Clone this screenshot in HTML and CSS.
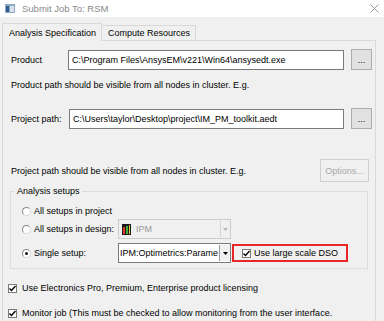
FILE: index.html
```html
<!DOCTYPE html>
<html lang="en">
<head>
  <meta charset="UTF-8" />
  <title>Submit Job To: RSM</title>
  <link rel="stylesheet" href="styles.css">
</head>
<body>
  <div class="window">
    <div class="titlebar">
      <svg class="app-icon" width="10" height="9" viewBox="0 0 10 9">
        <rect x="0" y="0" width="10" height="9" fill="#8fa9c4"/>
        <rect x="1" y="2" width="3" height="6" fill="#2f5e8e"/>
        <rect x="5" y="2" width="4" height="6" fill="#d9e2ec"/>
      </svg>
      <span class="title">Submit Job To: RSM</span>
      <svg class="close" width="9" height="9" viewBox="0 0 9 9">
        <path d="M0.5 0.5 L8.5 8.5 M8.5 0.5 L0.5 8.5" stroke="#9a9a9a" stroke-width="1"/>
      </svg>
    </div>

    <div class="tabs">
      <div class="tab active">Analysis Specification</div>
      <div class="tab">Compute Resources</div>
    </div>

    <div class="panel">
      <div class="path-row first">
        <span class="field-label">Product</span>
        <div class="textbox">C:\Program Files\AnsysEM\v221\Win64\ansysedt.exe</div>
        <button class="btn dots">...</button>
      </div>
      <div class="hint">Product path should be visible from all nodes in cluster. E.g.</div>

      <div class="path-row second">
        <span class="field-label">Project path:</span>
        <div class="textbox">C:\Users\taylor\Desktop\project\IM_PM_toolkit.aedt</div>
        <button class="btn dots">...</button>
      </div>

      <div class="hint-row">
        <span>Project path should be visible from all nodes in cluster. E.g.</span>
        <button class="btn options" disabled>Options...</button>
      </div>

      <fieldset class="group">
        <legend>Analysis setups</legend>
        <div class="radio-row">
          <span class="radio"></span>
          <span class="radio-label">All setups in project</span>
        </div>
        <div class="radio-row design">
          <span class="radio"></span>
          <span class="radio-label">All setups in design:</span>
          <div class="combo disabled">
            <svg class="design-icon" width="9" height="11" viewBox="0 0 9 11">
              <rect x="0" y="0" width="9" height="11" fill="#1a1a1a"/>
              <rect x="1" y="3" width="2" height="7" fill="#e23b2e"/>
              <rect x="4" y="2" width="2" height="8" fill="#3fae3a"/>
              <rect x="7" y="1" width="1" height="9" fill="#f2c230"/>
            </svg>
            <span class="combo-text">IPM</span>
            <span class="combo-arrow small">
              <svg width="5" height="3" viewBox="0 0 5 3"><path d="M0 0 L5 0 L2.5 3 Z" fill="#b5b5b5"/></svg>
            </span>
          </div>
        </div>
        <div class="radio-row single">
          <span class="radio checked"></span>
          <span class="radio-label">Single setup:</span>
          <div class="combo">
            <span class="combo-text">IPM:Optimetrics:Parame</span>
            <span class="combo-arrow">
              <svg width="5" height="3" viewBox="0 0 5 3"><path d="M0 0 L5 0 L2.5 3 Z" fill="#000"/></svg>
            </span>
          </div>
          <div class="highlight">
            <span class="check"><svg width="7" height="7" viewBox="0 0 7 7"><path d="M0.5 3.5 L2.5 5.5 L6.5 1" stroke="#000" stroke-width="1.4" fill="none"/></svg></span>
            <span>Use large scale DSO</span>
          </div>
        </div>
      </fieldset>

      <div class="check-row first-check">
        <span class="check"><svg width="7" height="7" viewBox="0 0 7 7"><path d="M0.5 3.5 L2.5 5.5 L6.5 1" stroke="#000" stroke-width="1.4" fill="none"/></svg></span>
        <span>Use Electronics Pro, Premium, Enterprise product licensing</span>
      </div>
      <div class="check-row">
        <span class="check"><svg width="7" height="7" viewBox="0 0 7 7"><path d="M0.5 3.5 L2.5 5.5 L6.5 1" stroke="#000" stroke-width="1.4" fill="none"/></svg></span>
        <span>Monitor job (This must be checked to allow monitoring from the user interface.</span>
      </div>
    </div>
  </div>
</body>
</html>
```

FILE: styles.css
```css
body {
  margin: 0;
  background: #f0f0f0;
}
.window {
  width: 384px;
  height: 321px;
  overflow: hidden;
  background: #f0f0f0;
  font-family: 'Liberation Sans', Arial, sans-serif;
  font-size: 9px;
  color: #000;
}
.titlebar {
  height: 17px;
  background: #fff;
  display: flex;
  align-items: center;
  padding-left: 5px;
}
.title {
  margin-left: 7px;
  color: #8a8a8a;
  font-size: 9.5px;
}
.close {
  margin-left: auto;
  margin-right: 5px;
}
.tabs {
  display: flex;
  align-items: flex-end;
  height: 17px;
  margin-top: 6px;
  padding-left: 2px;
}
.tab {
  height: 14px;
  line-height: 14px;
  padding: 0 5px 0 6px;
  border: 1px solid #d9d9d9;
  border-bottom: none;
  border-left: none;
  white-space: nowrap;
}
.tab.active {
  height: 17px;
  line-height: 19px;
  border-left: 1px solid #d9d9d9;
  padding: 0 5px 0 6px;
  margin-bottom: -1px;
  background: #f0f0f0;
  position: relative;
}
.panel {
  margin-left: 2px;
  width: 374px;
  height: 290px;
  border: 1px solid #d9d9d9;
  padding-left: 8px;
  box-sizing: border-box;
}
.path-row {
  display: flex;
  align-items: center;
  height: 21px;
}
.path-row.first {
  margin-top: 8px;
}
.path-row.second {
  margin-top: 17px;
}
.field-label {
  width: 57px;
  flex-shrink: 0;
}
.textbox {
  width: 271px;
  height: 18px;
  line-height: 18px;
  background: #fff;
  border: 1px solid #7a7a7a;
  padding-left: 3px;
  box-sizing: content-box;
  white-space: nowrap;
  overflow: hidden;
}
.path-row.second .textbox {
  width: 270px;
  margin-left: 1px;
}
.btn {
  font-family: inherit;
  font-size: 9px;
  background: #e1e1e1;
  border: 1px solid #adadad;
  padding: 0;
  color: #000;
}
.dots {
  width: 21px;
  height: 21px;
  margin-left: 7px;
  line-height: 14px;
}
.hint {
  margin-top: 9px;
  height: 12px;
  line-height: 12px;
}
.hint-row {
  margin-top: 30px;
  height: 23px;
  display: flex;
  align-items: center;
  justify-content: space-between;
  padding-right: 6px;
}
.options {
  width: 49px;
  height: 23px;
  background: #f0f0f0;
  border: 1px solid #cfcfcf;
  color: #a8a8a8;
}
.group {
  margin: 3px 0 0 -1px;
  width: 358px;
  box-sizing: border-box;
  border: 1px solid #dcdcdc;
  padding: 7px 0 6px 11px;
}
.group legend {
  padding: 0 2px;
  margin-left: -7px;
  line-height: 12px;
}
.radio-row {
  display: flex;
  align-items: center;
  height: 14px;
}
.radio-row.design {
  height: 20px;
  margin-top: 1px;
}
.radio-row.single {
  height: 18px;
  margin-top: 5px;
}
.radio {
  width: 7px;
  height: 7px;
  border-radius: 50%;
  background: #fff;
  border: 1px solid #8a8a8a;
  border-right-color: #d8d8d8;
  border-bottom-color: #d8d8d8;
  flex-shrink: 0;
  display: flex;
  align-items: center;
  justify-content: center;
}
.radio.checked::after {
  content: "";
  width: 3px;
  height: 3px;
  border-radius: 50%;
  background: #111;
}
.radio-label {
  margin-left: 3px;
  width: 84px;
  flex-shrink: 0;
  white-space: nowrap;
}
.combo {
  display: flex;
  align-items: center;
  height: 18px;
  width: 111px;
  border: 1px solid #7a7a7a;
  background: #fff;
  flex-shrink: 0;
}
.combo.disabled {
  width: 111px;
  border-color: #cccccc;
  background: #f0f0f0;
  color: #9a9a9a;
}
.design-icon {
  margin-left: 3px;
  margin-right: 5px;
}
.combo-text {
  flex: 1;
  white-space: nowrap;
  overflow: hidden;
  padding-left: 1px;
}
.combo.disabled .combo-text {
  padding-left: 0;
}
.combo-arrow {
  width: 10px;
  height: 16px;
  border-left: 1px solid #9a9a9a;
  background: #f0f0f0;
  display: flex;
  align-items: center;
  justify-content: center;
}
.combo-arrow.small {
  border-left: 1px solid #d5d5d5;
  width: 9px;
}
.highlight {
  margin-left: 1px;
  width: 116px;
  height: 18px;
  box-sizing: border-box;
  border: 2px solid #e8262a;
  display: flex;
  align-items: center;
  padding-left: 8px;
}
.check {
  width: 7px;
  height: 7px;
  border: 1px solid #7a7a7a;
  background: #fff;
  display: inline-flex;
  align-items: center;
  justify-content: center;
  margin-right: 3px;
  flex-shrink: 0;
}
.check-row {
  display: flex;
  align-items: center;
  height: 14px;
  margin-top: 11px;
  margin-left: -3px;
  white-space: nowrap;
}
.check-row .check {
  margin-right: 5px;
}
.check-row.first-check {
  margin-top: 12px;
}
```
